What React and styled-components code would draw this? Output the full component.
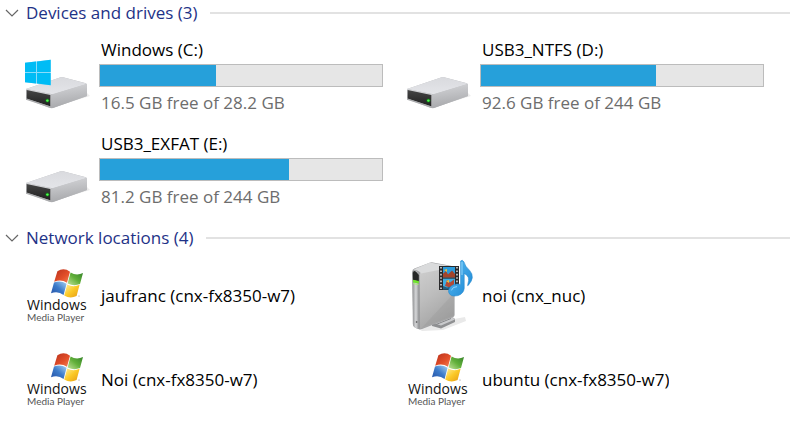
import React, { useState } from 'react';
import styled, { createGlobalStyle } from 'styled-components';

const drives = [
  { id: 'c', name: 'Windows (C:)', used: 41, info: '16.5 GB free of 28.2 GB', system: true },
  { id: 'd', name: 'USB3_NTFS (D:)', used: 62, info: '92.6 GB free of 244 GB' },
  { id: 'e', name: 'USB3_EXFAT (E:)', used: 67, info: '81.2 GB free of 244 GB' },
];

const locations = [
  { id: 'jaufranc', name: 'jaufranc (cnx-fx8350-w7)', type: 'player' },
  { id: 'cnx-nuc', name: 'noi (cnx_nuc)', type: 'server' },
  { id: 'noi', name: 'Noi (cnx-fx8350-w7)', type: 'player' },
  { id: 'ubuntu', name: 'ubuntu (cnx-fx8350-w7)', type: 'player' },
];

function DriveIcon({ id, system }) {
  return (
    <Icon viewBox="0 0 64 65" aria-hidden="true">
      <defs>
        <linearGradient id={`top-${id}`} x1="0" y1="0" x2="0" y2="1">
          <stop offset="0" stopColor="#d9dade" />
          <stop offset="1" stopColor="#e4e5e9" />
        </linearGradient>
        <linearGradient id={`side-${id}`} x1="0" y1="0" x2="0.2" y2="1">
          <stop offset="0" stopColor="#d6d7da" />
          <stop offset="1" stopColor="#a8a9ac" />
        </linearGradient>
        <linearGradient id={`front-${id}`} x1="0" y1="0" x2="0" y2="1">
          <stop offset="0" stopColor="#454545" />
          <stop offset="1" stopColor="#202020" />
        </linearGradient>
      </defs>
      <path d="M27 64 66 52 62 48 27 60Z" fill="#ededed" />
      <path d="M2 45 36 33.4Q38 32.8 40 33.4L61 39Q63 39.6 63 41V52L29 64Q27 64.5 25 63.8L2 55Z" fill="#b9babd" />
      <path d="M2 45 36 33.4Q38 32.8 40 33.4L61.5 39.2Q62.6 39.8 61.4 40.4L30 50Q28 50.4 26 49.8Z" fill={`url(#top-${id})`} />
      <path d="M27 50.4Q29 50.2 30 49.8L63 39.8V52L29 64 27 64Z" fill={`url(#side-${id})`} />
      <path d="M2 44.8 27 50.2V62L2 54Z" fill="#d2d3d6" />
      <path d="M2.6 46 26.4 51V62.4L2.6 54.4Z" fill={`url(#front-${id})`} />
      <path d="M2 54.6 27 62.6V64L2 55.8Z" fill="#aaabad" />
      <circle cx="23.4" cy="56.6" r="2" fill="#147319" />
      <circle cx="23.4" cy="56.6" r="1.2" fill="#50ff50" />
      {system && (
        <g>
          <path d="M1 18.8 26.7 15.7V41.3L1 38.2Z" fill="#8cdcfa" />
          <path d="M1 18.8 12 17.5V28H1ZM13 17.4 26.7 15.7V28H13ZM1 29H12V39.5L1 38.2ZM13 29H26.7V41.3L13 39.6Z" fill="#00bcf5" />
        </g>
      )}
    </Icon>
  );
}

function PlayerIcon({ id }) {
  return (
    <Icon viewBox="0 0 64 65" aria-hidden="true">
      <defs>
        <linearGradient id={`red-${id}`} x1="0" y1="0" x2="1" y2="1">
          <stop offset="0" stopColor="#b8301c" />
          <stop offset="0.6" stopColor="#e4502a" />
          <stop offset="1" stopColor="#f2855a" />
        </linearGradient>
        <linearGradient id={`green-${id}`} x1="1" y1="0" x2="0" y2="1">
          <stop offset="0" stopColor="#35832a" />
          <stop offset="0.5" stopColor="#62b03a" />
          <stop offset="1" stopColor="#c5e39a" />
        </linearGradient>
        <linearGradient id={`blue-${id}`} x1="0" y1="1" x2="1" y2="0">
          <stop offset="0" stopColor="#2450a4" />
          <stop offset="0.5" stopColor="#3c7bca" />
          <stop offset="1" stopColor="#a9d4f2" />
        </linearGradient>
        <linearGradient id={`yellow-${id}`} x1="1" y1="1" x2="0" y2="0">
          <stop offset="0" stopColor="#e59a13" />
          <stop offset="0.5" stopColor="#fbc926" />
          <stop offset="1" stopColor="#fff0a0" />
        </linearGradient>
      </defs>
      <path d="M33.4 8.2Q40 4.2 46 8.8L43 19.8Q37 15.8 30.2 18.8Z" fill={`url(#red-${id})`} />
      <path d="M46.6 9.4Q52.4 13.2 59 10L56 21Q50 23.6 43.6 20.4Z" fill={`url(#green-${id})`} />
      <path d="M30 19.6Q36.4 16.8 42.6 20.8L39.6 32Q34 27.4 27 30.2Z" fill={`url(#blue-${id})`} />
      <path d="M43.2 21.4Q49 24.8 55.6 21.8L52.6 33Q46 36.2 40.2 32.4Z" fill={`url(#yellow-${id})`} />
      <circle cx="55" cy="33" r="0.6" fill="#888888" />
      <WordMark x="3" y="47">Windows</WordMark>
      <WordMark x="3" y="58" $small>Media Player</WordMark>
    </Icon>
  );
}

function ServerIcon() {
  return (
    <Icon viewBox="0 0 64 65" aria-hidden="true">
      <defs>
        <linearGradient id="case" x1="0" y1="0" x2="0.4" y2="1">
          <stop offset="0" stopColor="#cfcfcf" />
          <stop offset="0.5" stopColor="#bdbdbd" />
          <stop offset="1" stopColor="#a4a4a4" />
        </linearGradient>
        <linearGradient id="face" x1="0" y1="0" x2="1" y2="0">
          <stop offset="0" stopColor="#8f9092" />
          <stop offset="0.5" stopColor="#d6d7d9" />
          <stop offset="1" stopColor="#88898b" />
        </linearGradient>
        <linearGradient id="note" x1="0" y1="0" x2="1" y2="1">
          <stop offset="0" stopColor="#5bbdf2" />
          <stop offset="1" stopColor="#1a86d4" />
        </linearGradient>
      </defs>
      <path d="M14 66 33 59 60 54 61 58 38 67 17 68Z" fill="#e9e9e9" />
      <path d="M27 60 46 53 50 56V59L36 65.5 27 63Z" fill="#8f9092" />
      <path d="M27 59.5 45 52 50 56.5 36 62.5Z" fill="#c9cacc" />
      <path d="M31 61.5 46 55.5" stroke="#88898b" strokeWidth="1" />
      <path d="M7.2 9Q7.2 6.6 9.4 5.6L24 0Q26 -1 28 -0.6L47 3Q49.6 3.8 49.6 6V52Q49.6 53.4 48 54L17 66Q14 67 12 65.6L9 64Q8 63 7.8 61Z" fill="#a2a3a5" />
      <path d="M14.4 11.5Q14.6 10 17 9.2L49 4V52.4Q49 53.4 47.6 54L15 65.8Z" fill="url(#case)" />
      <path d="M8.4 6.6 25-0.4 36 1.6 49 4 16 10.4Q13.4 7 8.4 6.6Z" fill="#dadbdc" />
      <path d="M17 64.4 49 30V52.6Z" fill="#8e8e8e" opacity="0.22" />
      <path d="M7.4 9Q9 6.4 12 8.6L14.4 12V65.8Q10.8 66.4 8.2 62Z" fill="url(#face)" />
      <path d="M7.8 10Q8.6 6.8 11.4 9L13.8 12V18.6L8 17Z" fill="#262827" />
      <path d="M8 16.8 13.8 18V20.4L8 19.4Z" fill="#70e52b" />
      <path d="M8.4 20.6 13.4 21.6" stroke="#a9ec7a" />
      <circle cx="11.6" cy="59" r="0.9" fill="#6c6c6c" />
      <rect x="34" y="3" width="20" height="24" fill="#29292b" />
      <rect x="38" y="4" width="12" height="10.4" fill="#2b9bdc" />
      <rect x="38" y="15.6" width="12" height="10.6" fill="#3eaee5" />
      <path d="M38 14.4V10.8L41 8 43 11.4 47 7.6 50 11V14.4Z" fill="#a4452c" />
      <path d="M40 23 42 17 45 19.4 49 16.6V21.4L45 24.6Z" fill="#b44a35" />
      <path d="M39 7 42 6 42 9ZM41 18 44 17V20Z" fill="#f0bf37" />
      <path d="M38 26.2V23L42 24.6 50 22.4V26.2Z" fill="#235f80" />
      <path d="M36 4V27M52 4V27" stroke="#c3c4c5" strokeWidth="1.8" strokeDasharray="1.6 1.8" />
      <path
        d="M55.6-2Q57.4-4 59-1 60 3.4 64.6 7.4 70.6 14 63.4 22.2 62.2 23.4 62.8 21.4 65.6 13 59.2 10.4V25.5Q58.6 30.6 53 32.6 45 34.4 43.6 29 43.2 23.6 49.4 21.4 52.8 20.4 55.6 21.4Z"
        fill="url(#note)"
        stroke="#2187cc"
        strokeWidth="0.6"
      />
      <path d="M57-1V12M46.4 27.4Q47.6 23.6 52 23.6" fill="none" stroke="#9bdcff" strokeWidth="0.9" />
    </Icon>
  );
}

function Section({ title, count, children }) {
  const [open, setOpen] = useState(true);

  return (
    <section>
      <Heading>
        <Toggle type="button" aria-expanded={open} onClick={() => setOpen(!open)}>
          <Chevron viewBox="0 0 14 8" $open={open} aria-hidden="true">
            <path d="M1 1 7 7 13 1" fill="none" stroke="#666666" strokeWidth="1.2" />
          </Chevron>
          {title} ({count})
        </Toggle>
        <Rule />
      </Heading>
      {open ? children : null}
    </section>
  );
}

export default function App() {
  return (
    <>
      <GlobalStyle />
      <Explorer>
        <Section title="Devices and drives" count={drives.length}>
          <TileGrid $gap={17}>
            {drives.map((drive) => (
              <li key={drive.id}>
                <Tile href={`#${drive.id}`}>
                  <DriveIcon id={drive.id} system={drive.system} />
                  <DriveDetails>
                    <Name>{drive.name}</Name>
                    <Capacity role="meter" aria-label={drive.name} aria-valuemin={0} aria-valuemax={100} aria-valuenow={drive.used}>
                      <Used style={{ width: `${drive.used}%` }} />
                    </Capacity>
                    <Info>{drive.info}</Info>
                  </DriveDetails>
                </Tile>
              </li>
            ))}
          </TileGrid>
        </Section>

        <Section title="Network locations" count={locations.length}>
          <TileGrid $gap={19}>
            {locations.map((place) => (
              <li key={place.id}>
                <Tile href={`#${place.id}`}>
                  {place.type === 'server' ? <ServerIcon /> : <PlayerIcon id={place.id} />}
                  <Name>{place.name}</Name>
                </Tile>
              </li>
            ))}
          </TileGrid>
        </Section>
      </Explorer>
    </>
  );
}

const GlobalStyle = createGlobalStyle`
  * {
    box-sizing: border-box;
  }
  body {
    margin: 0;
    background: #ffffff;
    color: #000000;
    font: 17px/24px 'Open Sans', 'Noto Sans', sans-serif;
  }
`;

const Explorer = styled.main`
  display: flex;
  flex-direction: column;
  gap: 17px;
  padding-top: 1px;
`;

const Heading = styled.h2`
  display: flex;
  align-items: center;
  gap: 12px;
  margin: 0 0 13px;
  font: inherit;
`;

const Toggle = styled.button`
  display: flex;
  align-items: center;
  gap: 7px;
  padding: 0 0 0 5px;
  border: 0;
  background: none;
  color: #1e3287;
  font: inherit;
  white-space: nowrap;
`;

const Chevron = styled.svg`
  width: 14px;
  height: 8px;
  transform: ${({ $open }) => ($open ? 'none' : 'rotate(-90deg)')};
`;

const Rule = styled.span`
  flex: 1;
  height: 2px;
  background: #e2e2e2;
`;

const TileGrid = styled.ul`
  display: grid;
  grid-template-columns: repeat(2, minmax(0, 1fr));
  row-gap: ${({ $gap }) => $gap}px;
  margin: 0;
  padding: 0 4px 0 24px;
  list-style: none;
`;

const Tile = styled.a`
  display: flex;
  align-items: center;
  gap: 11px;
  padding-right: 22px;
  color: inherit;
  text-decoration: none;
`;

const Icon = styled.svg`
  flex: none;
  width: 64px;
  height: 65px;
  overflow: visible;
`;

const WordMark = styled.text`
  font-family: ${({ $small }) => ($small ? "'Lato', sans-serif" : "'Open Sans', sans-serif")};
  font-size: ${({ $small }) => ($small ? 10 : 14)}px;
  font-weight: ${({ $small }) => ($small ? 400 : 500)};
  fill: ${({ $small }) => ($small ? '#555555' : '#111111')};
`;

const DriveDetails = styled.div`
  flex: 1;
  min-width: 0;
`;

const Name = styled.div`
  padding-left: 2px;
  overflow: hidden;
  white-space: nowrap;
  text-overflow: ellipsis;
`;

const Capacity = styled.div`
  height: 23px;
  margin: 2px 0 4px;
  border: 1px solid #bcbcbc;
  background: #e6e6e6;
`;

const Used = styled.div`
  height: 100%;
  background: #26a0da;
`;

const Info = styled(Name)`
  color: #6d6d6d;
`;
